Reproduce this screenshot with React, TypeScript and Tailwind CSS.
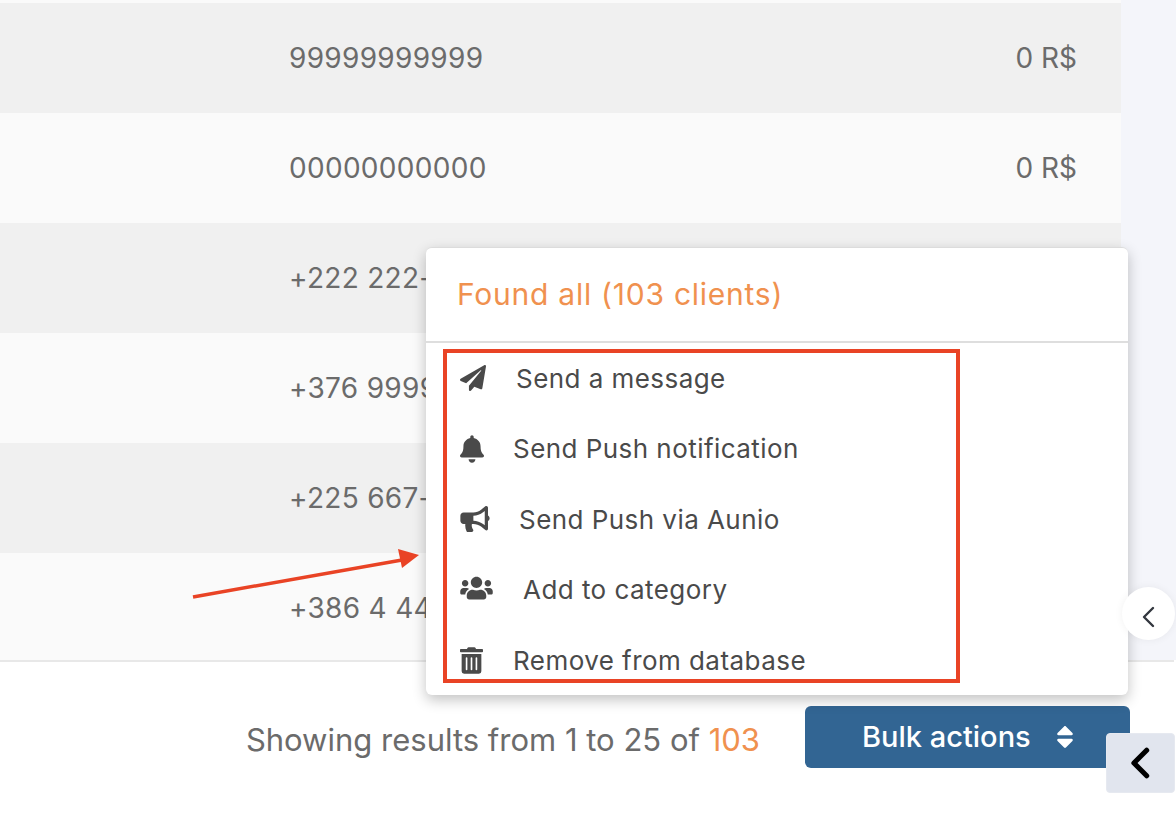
import { FaBell, FaBullhorn, FaPaperPlane, FaSort, FaTrashAlt, FaUsers } from "react-icons/fa";

const rows = [
  { phone: "99999999999", total: "0 R$", striped: true },
  { phone: "00000000000", total: "0 R$", striped: false },
  { phone: "+222 222-2222", total: "0 R$", striped: true },
  { phone: "+376 9999 999", total: "0 R$", striped: false },
  { phone: "+225 667-3344", total: "0 R$", striped: true },
  { phone: "+386 4 444 444", total: "0 R$", striped: false },
];

const ChevronLeft = ({ className }: { className: string }) => (
  <svg viewBox="0 0 24 24" fill="none" stroke="currentColor" strokeLinecap="round" strokeLinejoin="round" className={className}>
    <path d="M16 3 7 12l9 9" />
  </svg>
);

export default function App() {
  return (
    <div className="relative h-[816px] w-[1176px] overflow-hidden bg-white font-['Inter',sans-serif]">
      <div className="h-[660px] overflow-hidden bg-[#f4f5fa]">
        <div className="w-[1121px] bg-[#fafafa] pt-[3px]">
          {rows.map((row) => (
            <div
              key={row.phone}
              className={`flex h-[110px] items-center justify-between pl-[289px] pr-[44px] text-[28px] text-[#6b6b6b] ${
                row.striped ? "bg-[#f0f0f0]" : "bg-[#fafafa]"
              }`}
            >
              <span className="tracking-[0.3px]">{row.phone}</span>
              <span>{row.total}</span>
            </div>
          ))}
        </div>
      </div>

      <div className="mr-[2px] flex items-start justify-end gap-[45px] border-t-2 border-[#e8e8e8] pr-[44px] pt-[44px]">
        <div className="pt-[16px] text-[31px] leading-[35px] text-[#6b6b6b]">
          Showing results from 1 to 25 of <span className="text-[#f0914f]">103</span>
        </div>
        <button className="flex h-[62px] w-[325px] items-center gap-[24px] rounded-md bg-[#326593] pl-[57px] text-[29px] font-medium text-white">
          Bulk actions
          <FaSort className="h-[28px] w-[20px]" />
        </button>
      </div>

      {/* dropdown */}
      <div className="absolute left-[426px] top-[247px] h-[448px] w-[702px] rounded-md border-t border-[#dcdcdc] bg-white shadow-[0_5px_14px_rgba(0,0,0,0.24)]">
        <div className="flex h-[95px] items-center border-b-2 border-[#dedede] pl-[31px] text-[30px] tracking-[0.75px] text-[#f0914f]">
          Found all (103 clients)
        </div>
        <ul className="pl-[34px] pt-[13px] text-[26px] leading-[46px] tracking-[0.45px] text-[#4a4a4a]">
          <li className="flex h-[70px] items-start">
            <FaPaperPlane className="mt-[9px] h-[26px] w-[26px]" />
            <span className="ml-[30px]">Send a message</span>
          </li>
          <li className="flex h-[71px] items-start">
            <FaBell className="mt-[9px] h-[28px] w-[24px]" />
            <span className="ml-[29px]">Send Push notification</span>
          </li>
          <li className="flex h-[70px] items-start">
            <FaBullhorn className="mt-[9px] h-[26px] w-[30px]" />
            <span className="ml-[29px]">Send Push via Aunio</span>
          </li>
          <li className="flex h-[71px] items-start">
            <FaUsers className="mt-[8px] h-[26px] w-[33px]" />
            <span className="ml-[30px]">Add to category</span>
          </li>
          <li className="flex items-start">
            <FaTrashAlt className="mt-[9px] h-[27px] w-[23px]" />
            <span className="ml-[30px]">Remove from database</span>
          </li>
        </ul>
      </div>

      {/* annotation */}
      <div className="absolute left-[443px] top-[349px] h-[334px] w-[517px] border-4 border-[#e94325]" />
      <svg viewBox="0 0 240 52" className="absolute left-[190px] top-[548px] h-[52px] w-[240px]">
        <path d="M3 49 212 12" stroke="#e94325" strokeWidth="3.5" fill="none" />
        <path d="M229 7 208 1 212 20z" fill="#e94325" />
      </svg>

      {/* side toggles */}
      <div className="absolute left-[1122px] top-[587px] flex h-[53px] w-[53px] items-center justify-center rounded-full bg-white text-[#33373f] shadow-[0_0_8px_rgba(0,0,0,0.06)]">
        <ChevronLeft className="mt-[7px] h-[24px] w-[24px] stroke-[2.4]" />
      </div>
      <div className="absolute left-[1106px] top-[733px] flex h-[60px] w-[69px] items-center justify-center rounded border border-[#e6e9f0] bg-[#e1e5ee] text-black">
        <ChevronLeft className="h-[34px] w-[34px] stroke-[3.6]" />
      </div>
    </div>
  );
}
